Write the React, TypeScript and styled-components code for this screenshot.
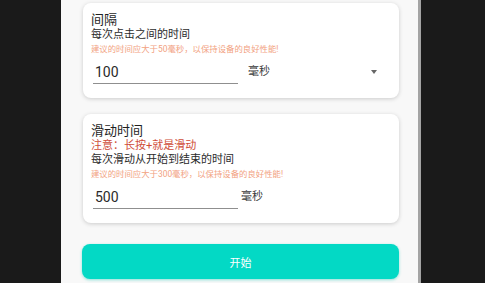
import React from "react";
import styled, { createGlobalStyle } from "styled-components";

const Global = createGlobalStyle`
  html, body { margin: 0; padding: 0; height: 100%; overflow: hidden; }
  body { background: #1a1a1a; font-family: Roboto, "Noto Sans CJK SC", sans-serif; }
  #root { height: 100%; }
`;

const Screen = styled.div`
  display: flex;
  height: 283px;
  width: 485px;
  background: #1a1a1a;
`;

const SideGap = styled.div`
  width: 61px;
  flex: none;
`;

const Panel = styled.div`
  width: 357px;
  flex: none;
  background: #f8f8f8;
  padding: 3px 19px 0 22px;
  box-sizing: border-box;
  display: flex;
  flex-direction: column;
`;

const ScrollStrip = styled.div`
  width: 3px;
  flex: none;
  background: #a4a4a4;
`;

const Card = styled.div<{ $mb: number }>`
  background: #fff;
  border-radius: 8px;
  box-shadow: 0 1px 4px rgba(0, 0, 0, 0.18);
  padding: 9px 22px 14px 8px;
  margin-bottom: ${(p) => p.$mb}px;
  display: flex;
  flex-direction: column;
`;

const Title = styled.div`
  font-size: 13px;
  line-height: 16px;
  color: #1f1f1f;
`;

const Line = styled.div<{ $red?: boolean }>`
  font-size: 11px;
  line-height: 14px;
  color: ${(p) => (p.$red ? "#cf4d38" : "#2b2b2b")};
`;

const Warn = styled.div`
  font-size: 8.4px;
  line-height: 14px;
  color: #f2a282;
`;

const InputRow = styled.div`
  display: flex;
  align-items: center;
  margin-top: 4px;
  padding-left: 2px;
`;

const Field = styled.div`
  width: 145px;
  height: 24px;
  box-sizing: border-box;
  border-bottom: 1px solid #8f8f8f;
  padding: 0 2px;
  display: flex;
  align-items: center;
  font-size: 14px;
  color: #2a2a2a;
`;

const Unit = styled.div<{ $gap: number }>`
  margin-left: ${(p) => p.$gap}px;
  font-size: 11px;
  color: #3a3a3a;
  line-height: 24px;
`;

const Select = styled.div`
  flex: 1;
  display: flex;
  align-items: center;
  justify-content: space-between;
`;

const Arrow = styled.div`
  width: 0;
  height: 0;
  border-left: 3.5px solid transparent;
  border-right: 3.5px solid transparent;
  border-top: 4px solid #666;
`;

const StartButton = styled.button`
  height: 35px;
  border: none;
  border-radius: 8px;
  background: #03d9c5;
  box-shadow: 0 1px 3px rgba(0, 200, 180, 0.45);
  color: #fff;
  font-family: Roboto, "Noto Sans CJK SC", sans-serif;
  font-size: 11px;
  padding: 0;
  margin-left: -1px;
`;

export default function App() {
  return (
    <>
      <Global />
      <Screen>
        <SideGap />
        <Panel>
          <Card $mb={16}>
            <Title>间隔</Title>
            <Line>每次点击之间的时间</Line>
            <Warn>建议的时间应大于50毫秒，以保持设备的良好性能!</Warn>
            <InputRow>
              <Field>100</Field>
              <Select>
                <Unit $gap={10}>毫秒</Unit>
                <Arrow />
              </Select>
            </InputRow>
          </Card>
          <Card $mb={21}>
            <Title>滑动时间</Title>
            <Line $red>注意：长按+就是滑动</Line>
            <Line>每次滑动从开始到结束的时间</Line>
            <Warn>建议的时间应大于300毫秒，以保持设备的良好性能!</Warn>
            <InputRow>
              <Field>500</Field>
              <Unit $gap={3}>毫秒</Unit>
            </InputRow>
          </Card>
          <StartButton>开始</StartButton>
        </Panel>
        <ScrollStrip />
      </Screen>
    </>
  );
}
